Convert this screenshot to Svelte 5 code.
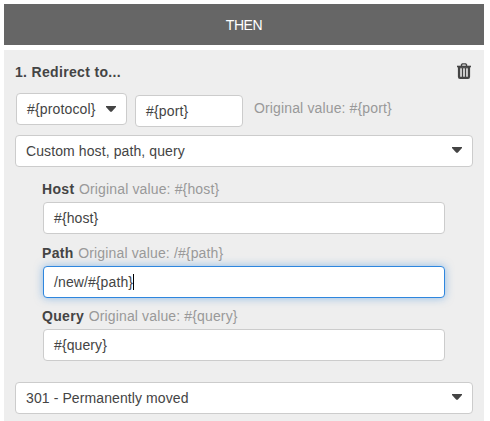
<script>
  const fields = [
    { name: 'Host', original: '#{host}', value: '#{host}' },
    { name: 'Path', original: '/#{path}', value: '/new/#{path}', active: true },
    { name: 'Query', original: '#{query}', value: '#{query}' }
  ];
</script>

{#snippet caret()}
  <svg class="caret" width="10" height="6" viewBox="0 0 10 6"><path d="M0 0h10v1L5.7 5.7H4.3L0 1z" fill="#444" /></svg>
{/snippet}

<div class="editor">
  <header>THEN</header>
  <section>
    <div class="title">
      <strong>1. Redirect to...</strong>
      <svg width="14" height="16" viewBox="0 0 14 16" fill="none" stroke="#444">
        <path d="M4.5 3V1.8l.8-.9h3.4l.8.9V3" stroke-width="1.4" />
        <path d="M0 3.5h14" stroke-width="1.6" />
        <path d="M2 4v9.7q0 1.2 1 1.2h8q1 0 1-1.2V4" stroke-width="2.2" fill="#d2d2d2" />
        <path d="M2 4.7h10" stroke-width="1.2" />
        <path d="M5.5 5v9M8.5 5v9" stroke-width="1.1" />
      </svg>
    </div>
    <div class="origin">
      <div class="box protocol"><span>#{'{protocol}'}</span>{@render caret()}</div>
      <div class="box port">#{'{port}'}</div>
      <span class="hint">Original value: #{'{port}'}</span>
    </div>
    <div class="box select"><span>Custom host, path, query</span>{@render caret()}</div>
    <div class="fields">
      {#each fields as f}
        <div class="field">
          <div class="label"><strong>{f.name}</strong><span class="hint">Original value: {f.original}</span></div>
          <div class="box" class:active={f.active}><span>{f.value}</span>{#if f.active}<i></i>{/if}</div>
        </div>
      {/each}
    </div>
    <div class="box select"><span>301 - Permanently moved</span>{@render caret()}</div>
  </section>
</div>

<style>
  :global(body) { background: #fff; overflow: hidden; }
  .editor {
    box-sizing: border-box;
    width: 490px;
    height: 421px;
    padding: 4px 6px 0 4px;
    display: flex;
    flex-direction: column;
    gap: 5px;
    overflow: hidden;
    font: 14px/20px "Liberation Sans", Arial, sans-serif;
    color: #444;
  }
  header {
    height: 41px;
    flex: none;
    background: #666;
    color: #fff;
    line-height: 43px;
    letter-spacing: -0.4px;
    text-align: center;
  }
  section {
    flex: 1;
    box-sizing: border-box;
    padding: 12px 11px 0;
    background: #eee;
  }
  .title {
    display: flex;
    justify-content: space-between;
    height: 31px;
    padding-right: 2px;
  }
  .title svg { margin-top: 1px; }
  strong { letter-spacing: 0.33px; }
  .origin {
    display: flex;
    align-items: flex-start;
    height: 42px;
    padding-left: 1px;
  }
  .box {
    box-sizing: border-box;
    height: 32px;
    display: flex;
    align-items: center;
    padding: 0 10px;
    background: #fff;
    border: 1px solid #ccc;
    border-radius: 4px;
    letter-spacing: 0.1px;
    white-space: pre;
  }
  .protocol { width: 111px; justify-content: space-between; letter-spacing: 0.15px; }
  .port { width: 108px; margin: 2px 11px 0 8px; letter-spacing: 0.15px; }
  .origin .hint { margin-top: 5px; }
  .select { justify-content: space-between; }
  .select .caret { margin-top: -2px; }
  .hint { color: #999; letter-spacing: 0.14px; }
  .fields {
    display: flex;
    flex-direction: column;
    gap: 8px;
    padding: 12px 28px 21px;
  }
  .field:first-child { margin-bottom: 1px; }
  .label { display: flex; gap: 4.6px; height: 23px; margin-left: -1px; }
  .active {
    border-color: #2e86de;
    box-shadow: 0 0 8px rgba(46, 134, 222, .5);
  }
  i { width: 1px; height: 16px; background: #000; }
</style>
